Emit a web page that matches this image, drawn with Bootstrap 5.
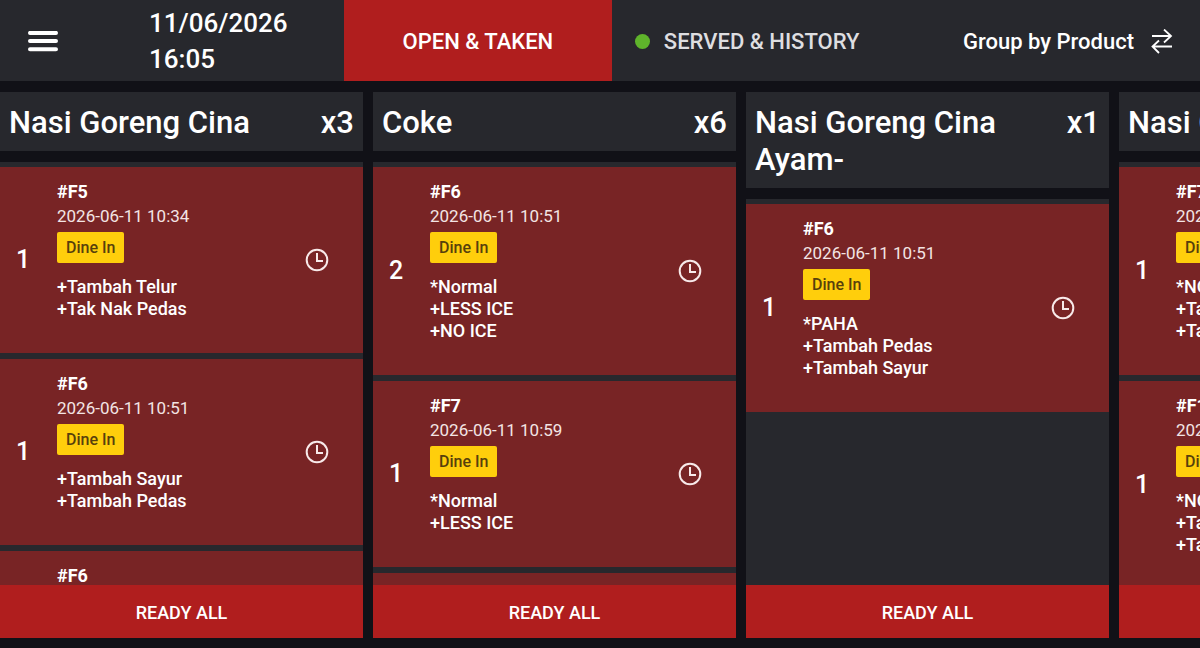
<!DOCTYPE html>
<html lang="en">
<head>
<meta charset="utf-8">
<meta name="viewport" content="width=device-width, initial-scale=1">
<title>Kitchen display</title>
<link href="https://cdn.jsdelivr.net/npm/bootstrap@5.3.0/dist/css/bootstrap.min.css" rel="stylesheet">
<style>
  body { background: #111117; color: #fff; font-family: Roboto, "Noto Sans", sans-serif; font-weight: 500; }
  button { font-weight: 500; color: inherit; }
  .topbar { background: #27282d; height: 81px; font-size: 22px; }
  .topbar button { padding: 2px 0 0; background: none; color: inherit; }
  .brand-zone { width: 28.66%; }
  .menu-btn { width: 86px; }
  .clock { font-size: 26px; line-height: 36px; padding-left: 63px; }
  .tab-btn { width: 22.33%; }
  .topbar .tab-btn.active { background: #b01e1e; }
  .topbar .tab-btn.served { color: #dedee0; gap: 14px; padding-left: 23px; }
  .dot { width: 15px; height: 15px; background: #5fb42b; }
  .topbar .group-btn { gap: 17px; padding-right: 27px; }
  .board { gap: 10px; padding: 11px 0 10px; }
  .product { flex: 0 0 30.25%; gap: 11px; }
  .panel { background: #27282d; }
  .title-bar { padding: 12px 9px 10px; font-size: 31px; line-height: 37px; }
  .title-bar h2 { font-size: 31px; line-height: 37px; font-weight: 500; }
  .queue { padding-top: 5px; gap: 6px; }
  .ticket { background: #782425; padding: 13px 34px 13px 0; }
  .ticket-body { padding-bottom: 20px; }
  .qty { width: 57px; padding-right: 11px; font-size: 25px; line-height: 30px; }
  .ticket-no { font-size: 18px; line-height: 24px; font-weight: 700; }
  .ticket-time { font-size: 17px; line-height: 24px; font-weight: 400; color: #f3e4e4; }
  .kind { background: #ffce0c; color: #57400c; font-size: 16px; line-height: 31px; padding: 0 9px; margin: 4px 0 13px; border-radius: 2px; }
  .options { font-size: 18px; line-height: 22px; }
  .ready { background: #b01e1e; height: 53px; font-size: 18px; padding: 2px 0 0; }
</style>
</head>
<body class="vh-100 overflow-hidden d-flex flex-column">
<svg class="d-none">
  <symbol id="clock-icon" viewBox="0 0 24 24"><g fill="none" stroke="#f8eaea" stroke-width="2"><circle cx="12" cy="12" r="10.3"/><path d="M12 5v8h6"/></g></symbol>
</svg>
<header class="topbar d-flex flex-shrink-0">
  <div class="brand-zone d-flex align-items-stretch">
    <button class="menu-btn border-0" aria-label="Menu">
      <svg width="32" height="24" viewBox="0 0 32 24" stroke="#fff" stroke-width="4" stroke-linecap="round"><path d="M3 1.900h26M3 10h26M3 18.300h26"/></svg>
    </button>
    <time class="clock flex-fill align-self-center">11/06/2026<br>16:05</time>
  </div>
  <button class="tab-btn active border-0">OPEN &amp; TAKEN</button>
  <button class="tab-btn served border-0 d-flex align-items-center"><span class="dot rounded-circle"></span>SERVED &amp; HISTORY</button>
  <button class="group-btn border-0 ms-auto d-flex align-items-center">Group by Product
    <svg width="22" height="26" viewBox="0 0 22 26" fill="none" stroke="#fff" stroke-width="1.800"><path d="M1 7h19M13 0.500l7 6.500-7 6.500M21 17.500H2M8 11.500l-6.500 6 6.500 6.500"/></svg>
  </button>
</header>
<main class="board d-flex flex-fill overflow-hidden">
  <section class="product d-flex flex-column">
    <div class="title-bar panel d-flex justify-content-between"><h2 class="m-0">Nasi Goreng Cina</h2><span>x3</span></div>
    <div class="panel d-flex flex-column flex-fill overflow-hidden">
      <div class="queue d-flex flex-column flex-fill overflow-hidden">
        <article class="ticket d-flex align-items-center flex-shrink-0">
          <div class="qty text-center">1</div>
          <div class="ticket-body flex-fill"><div class="ticket-no">#F5</div><div class="ticket-time">2026-06-11 10:34</div><span class="kind d-inline-block align-top">Dine In</span><div class="options">+Tambah Telur<br>+Tak Nak Pedas</div></div>
          <svg width="24" height="24"><use href="#clock-icon"/></svg>
        </article>
        <article class="ticket d-flex align-items-center flex-shrink-0">
          <div class="qty text-center">1</div>
          <div class="ticket-body flex-fill"><div class="ticket-no">#F6</div><div class="ticket-time">2026-06-11 10:51</div><span class="kind d-inline-block align-top">Dine In</span><div class="options">+Tambah Sayur<br>+Tambah Pedas</div></div>
          <svg width="24" height="24"><use href="#clock-icon"/></svg>
        </article>
        <article class="ticket d-flex align-items-center flex-shrink-0">
          <div class="qty"></div>
          <div class="ticket-body flex-fill"><div class="ticket-no">#F6</div></div>
        </article>
      </div>
      <button class="ready border-0 flex-shrink-0">READY ALL</button>
    </div>
  </section>
  <section class="product d-flex flex-column">
    <div class="title-bar panel d-flex justify-content-between"><h2 class="m-0">Coke</h2><span>x6</span></div>
    <div class="panel d-flex flex-column flex-fill overflow-hidden">
      <div class="queue d-flex flex-column flex-fill overflow-hidden">
        <article class="ticket d-flex align-items-center flex-shrink-0">
          <div class="qty text-center">2</div>
          <div class="ticket-body flex-fill"><div class="ticket-no">#F6</div><div class="ticket-time">2026-06-11 10:51</div><span class="kind d-inline-block align-top">Dine In</span><div class="options">*Normal<br>+LESS ICE<br>+NO ICE</div></div>
          <svg width="24" height="24"><use href="#clock-icon"/></svg>
        </article>
        <article class="ticket d-flex align-items-center flex-shrink-0">
          <div class="qty text-center">1</div>
          <div class="ticket-body flex-fill"><div class="ticket-no">#F7</div><div class="ticket-time">2026-06-11 10:59</div><span class="kind d-inline-block align-top">Dine In</span><div class="options">*Normal<br>+LESS ICE</div></div>
          <svg width="24" height="24"><use href="#clock-icon"/></svg>
        </article>
        <article class="ticket flex-shrink-0"></article>
      </div>
      <button class="ready border-0 flex-shrink-0">READY ALL</button>
    </div>
  </section>
  <section class="product d-flex flex-column">
    <div class="title-bar panel d-flex justify-content-between"><h2 class="m-0">Nasi Goreng Cina Ayam-</h2><span>x1</span></div>
    <div class="panel d-flex flex-column flex-fill overflow-hidden">
      <div class="queue d-flex flex-column flex-fill overflow-hidden">
        <article class="ticket d-flex align-items-center flex-shrink-0">
          <div class="qty text-center">1</div>
          <div class="ticket-body flex-fill"><div class="ticket-no">#F6</div><div class="ticket-time">2026-06-11 10:51</div><span class="kind d-inline-block align-top">Dine In</span><div class="options">*PAHA<br>+Tambah Pedas<br>+Tambah Sayur</div></div>
          <svg width="24" height="24"><use href="#clock-icon"/></svg>
        </article>
      </div>
      <button class="ready border-0 flex-shrink-0">READY ALL</button>
    </div>
  </section>
  <section class="product d-flex flex-column">
    <div class="title-bar panel d-flex justify-content-between"><h2 class="m-0">Nasi Goreng</h2><span>x2</span></div>
    <div class="panel d-flex flex-column flex-fill overflow-hidden">
      <div class="queue d-flex flex-column flex-fill overflow-hidden">
        <article class="ticket d-flex align-items-center flex-shrink-0">
          <div class="qty text-center">1</div>
          <div class="ticket-body flex-fill"><div class="ticket-no">#F7</div><div class="ticket-time">2026-06-11 10:59</div><span class="kind d-inline-block align-top">Dine In</span><div class="options">*NORMAL<br>+Tambah Pedas<br>+Tambah Sayur</div></div>
          <svg width="24" height="24"><use href="#clock-icon"/></svg>
        </article>
        <article class="ticket d-flex align-items-center flex-shrink-0">
          <div class="qty text-center">1</div>
          <div class="ticket-body flex-fill"><div class="ticket-no">#F10</div><div class="ticket-time">2026-06-11 11:05</div><span class="kind d-inline-block align-top">Dine In</span><div class="options">*NORMAL<br>+Tambah Pedas<br>+Tambah Sayur</div></div>
          <svg width="24" height="24"><use href="#clock-icon"/></svg>
        </article>
      </div>
      <button class="ready border-0 flex-shrink-0">READY ALL</button>
    </div>
  </section>
</main>
<script src="https://cdn.jsdelivr.net/npm/bootstrap@5.3.0/dist/js/bootstrap.bundle.min.js"></script>
</body>
</html>
